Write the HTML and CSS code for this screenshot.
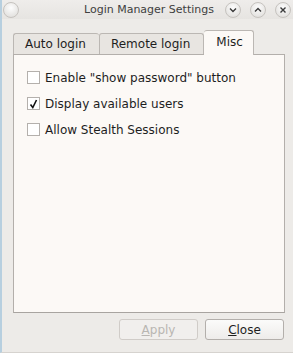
FILE: index.html
```html
<!DOCTYPE html>
<html lang="en">
<head>
    <meta charset="UTF-8">
    <title>Login Manager Settings</title>
    <link rel="stylesheet" href="styles.css">
</head>
<body>
    <div class="window">
        <div class="titlebar">
            <span class="tb-btn menu-btn"></span>
            <div class="title">Login Manager Settings</div>
            <span class="tb-btn">
                <svg width="8" height="8" viewBox="0 0 8 8"><path d="M1 2.5 L4 5.5 L7 2.5" fill="none" stroke="#3a3a3a" stroke-width="1.4"/></svg>
            </span>
            <span class="tb-btn">
                <svg width="8" height="8" viewBox="0 0 8 8"><path d="M1 5.5 L4 2.5 L7 5.5" fill="none" stroke="#3a3a3a" stroke-width="1.4"/></svg>
            </span>
            <span class="tb-btn">
                <svg width="8" height="8" viewBox="0 0 8 8"><path d="M1.5 1.5 L6.5 6.5 M6.5 1.5 L1.5 6.5" fill="none" stroke="#3a3a3a" stroke-width="1.4"/></svg>
            </span>
        </div>

        <div class="content">
            <div class="tabs">
                <div class="tab">Auto login</div>
                <div class="tab">Remote login</div>
                <div class="tab active">Misc</div>
            </div>
            <div class="panel">
                <label class="check-row">
                    <span class="checkbox"></span>
                    Enable "show password" button
                </label>
                <label class="check-row">
                    <span class="checkbox">
                        <svg width="9" height="10" viewBox="0 0 9 10"><path d="M1.5 5.5 L3.8 8.5 L7.5 1" fill="none" stroke="#111" stroke-width="1.6"/></svg>
                    </span>
                    Display available users
                </label>
                <label class="check-row">
                    <span class="checkbox"></span>
                    Allow Stealth Sessions
                </label>
            </div>
            <div class="buttons">
                <button class="btn" disabled><u>A</u>pply</button>
                <button class="btn"><u>C</u>lose</button>
            </div>
        </div>
    </div>
</body>
</html>
```

FILE: styles.css
```css
body {
    margin: 0;
    font-family: "DejaVu Sans", sans-serif;
    background: #edebe8;
}
.window {
    width: 293px;
    height: 353px;
    box-sizing: border-box;
    background: #edebe8;
    border-left: 2px solid #b7cfdf;
    border-bottom: 1px solid #d6d3cf;
    display: flex;
    flex-direction: column;
}
.titlebar {
    height: 19px;
    display: flex;
    align-items: center;
    padding: 0 2px 0 1px;
    background: linear-gradient(#efedeb, #e6e4e1);
    gap: 9px;
}
.title {
    flex: 1;
    text-align: center;
    font-size: 11px;
    color: #404040;
    padding-left: 54px;
}
.tb-btn {
    width: 14px;
    height: 14px;
    border-radius: 50%;
    background: radial-gradient(circle at 50% 35%, #fdfdfd, #dcdad7);
    border: 1px solid #c6c3bf;
    display: flex;
    align-items: center;
    justify-content: center;
}
.content {
    flex: 1;
    display: flex;
    flex-direction: column;
    padding: 11px 8px 12px 11px;
}
.tabs {
    display: flex;
    align-items: flex-end;
    height: 24px;
    position: relative;
    z-index: 1;
}
.tab {
    height: 21px;
    box-sizing: border-box;
    padding: 3px 13px 0 11px;
    font-size: 12px;
    color: #1e1e1e;
    background: #e8e5e1;
    border: 1px solid #bbb7b3;
    border-bottom: none;
    border-right: none;
    border-radius: 3px 3px 0 0;
}
.tab:nth-child(2) {
    border-right: 1px solid #bbb7b3;
}
.tab.active {
    height: 25px;
    margin-bottom: -1px;
    padding: 4px 10px 0 12px;
    background: #fcf9f6;
    border-right: 1px solid #bbb7b3;
    border-left: none;
}
.panel {
    flex: 1;
    background: #fcf9f6;
    border: 1px solid #b3afab;
    border-bottom-color: #a8a4a0;
    padding: 16px 0 0 13px;
    display: flex;
    flex-direction: column;
    gap: 13px;
}
.check-row {
    display: flex;
    align-items: center;
    gap: 5px;
    font-size: 12px;
    color: #1e1e1e;
    height: 13px;
}
.checkbox {
    width: 11px;
    height: 11px;
    border: 1px solid #b4b0ac;
    background: #ffffff;
    display: flex;
    align-items: center;
    justify-content: center;
}
.buttons {
    display: flex;
    justify-content: flex-end;
    gap: 7px;
    margin: 6px 1px 0 0;
}
.btn {
    width: 79px;
    height: 21px;
    font-family: "DejaVu Sans", sans-serif;
    font-size: 12px;
    color: #1e1e1e;
    background: linear-gradient(#fbfbfa, #eeecea);
    border: 1px solid #b3afab;
    border-radius: 3px;
    padding: 0;
}
.btn:disabled {
    color: #b9b6b2;
    border-color: #d0ccc8;
    background: #f1efed;
}
```
